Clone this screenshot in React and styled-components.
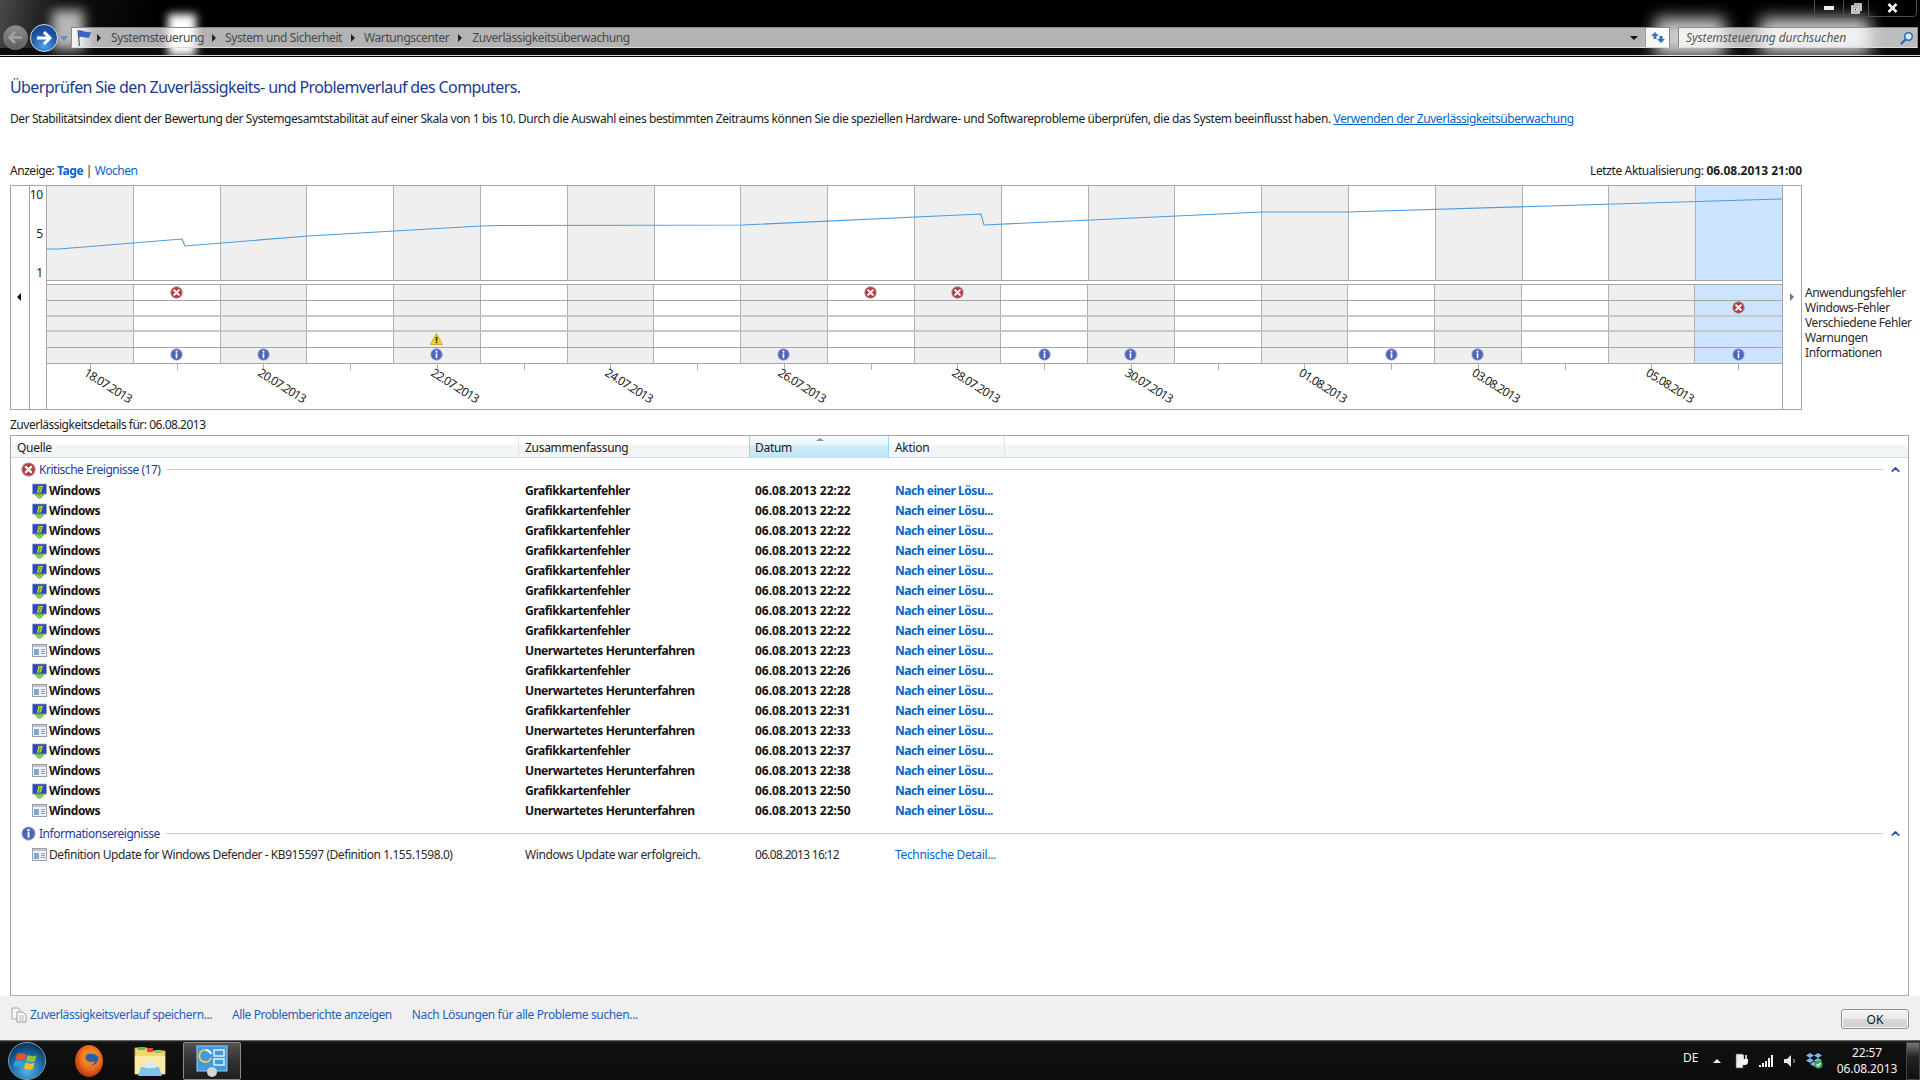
import styled, { createGlobalStyle } from "styled-components";
import { ChevronUp } from "lucide-react";

const GlobalStyle = createGlobalStyle`
  html, body {
    margin: 0;
    padding: 0;
    background: #fff;
    overflow: hidden;
  }
  body {
    font-family: "Noto Sans", "Open Sans", sans-serif;
    font-size: 12px;
    letter-spacing: -0.45px;
    color: #1c1c1c;
  }
  * { box-sizing: border-box; }
`;

const COLUMNS = "508px 231px 139px 116px 1fr";

const Page = styled.div`
  width: 1920px;
  height: 1080px;
  display: flex;
  flex-direction: column;
  overflow: hidden;
`;

/* ---------- title bar ---------- */

const TitleBar = styled.div`
  position: relative;
  height: 57px;
  flex: none;
  background: linear-gradient(100deg, #4a4a4a 0, #111 60px, #000 160px);
  border-bottom: 1px solid #000;
  box-shadow: inset 0 -1px 0 #d8d8d8, inset 0 -8px 0 #0c0c0c;
  display: flex;
  align-items: flex-start;
  padding-top: 27px;
  overflow: hidden;
`;

const Glow = styled.div`
  position: absolute;
  background: #fff;
  filter: blur(${(p) => p.$blur || 5}px);
  opacity: ${(p) => p.$o || 1};
  left: ${(p) => p.$x}px;
  top: ${(p) => p.$y}px;
  width: ${(p) => p.$w}px;
  height: ${(p) => p.$h}px;
`;

const NavGroup = styled.div`
  position: relative;
  width: 71px;
  height: 21px;
  flex: none;
`;

const NavButton = styled.div`
  position: absolute;
  top: ${(p) => (p.$active ? -3 : -2)}px;
  left: ${(p) => (p.$active ? 30 : 3)}px;
  width: ${(p) => (p.$active ? 28 : 25)}px;
  height: ${(p) => (p.$active ? 28 : 25)}px;
  border-radius: 50%;
  border: 1px solid ${(p) => (p.$active ? "#c8dcf4" : "#777")};
  background: ${(p) =>
    p.$active
      ? "radial-gradient(circle at 50% 80%, #4aa2ea, #1a4f9e 60%, #173d80)"
      : "linear-gradient(#8e8e8e, #5e5e5e)"};
  display: flex;
  align-items: center;
  justify-content: center;
`;

const NavDrop = styled.div`
  position: absolute;
  left: 60px;
  top: 9px;
  width: 0;
  height: 0;
  border-left: 4px solid transparent;
  border-right: 4px solid transparent;
  border-top: 5px solid #5d8fc4;
`;

const AddressBar = styled.div`
  position: relative;
  width: 1599px;
  height: 21px;
  flex: none;
  background: linear-gradient(90deg, #f4f4f4 0, rgba(255, 255, 255, 0.7) 22px);
  border: 1px solid #8a8a8a;
  border-bottom-color: #dcdcdc;
  display: flex;
  align-items: center;
  color: #4a4a4a;
  letter-spacing: -0.4px;
`;

const Crumbs = styled.div`
  display: flex;
  align-items: center;
  flex: 1;
  padding-left: 3px;
`;

const Crumb = styled.span`
  margin-left: ${(p) => p.$gap}px;
`;

const CrumbArrow = styled.span`
  width: 0;
  height: 0;
  margin-left: ${(p) => p.$gap}px;
  border-top: 4px solid transparent;
  border-bottom: 4px solid transparent;
  border-left: 4px solid #222;
`;

const HistoryDrop = styled.div`
  width: 0;
  height: 0;
  margin-right: 7px;
  border-left: 4px solid transparent;
  border-right: 4px solid transparent;
  border-top: 4px solid #111;
`;

const RefreshBox = styled.div`
  width: 24px;
  height: 19px;
  background: rgba(255, 255, 255, 0.85);
  border-left: 1px solid #999;
  display: flex;
  align-items: center;
  justify-content: center;
`;

const SearchBox = styled.div`
  position: relative;
  width: 240px;
  height: 21px;
  margin-left: 8px;
  flex: none;
  background: rgba(255, 255, 255, 0.74);
  border: 1px solid #8a8a8a;
  border-bottom-color: #dcdcdc;
  display: flex;
  align-items: center;
  justify-content: space-between;
  padding: 0 3px 0 7px;
  color: #555;
  font-style: italic;
  letter-spacing: -0.09px;
`;

const WindowButtons = styled.div`
  position: absolute;
  right: 3px;
  top: -1px;
  width: 103px;
  height: 18px;
  display: flex;
  border: 1px solid #4d4d4d;
  border-radius: 0 0 4px 4px;
`;

const WindowButton = styled.div`
  width: ${(p) => p.$w}px;
  display: flex;
  align-items: center;
  justify-content: center;
  border-right: ${(p) => (p.$last ? "none" : "1px solid #4d4d4d")};
`;

/* ---------- main ---------- */

const Main = styled.main`
  flex: 1;
  min-height: 0;
  display: flex;
  flex-direction: column;
  padding: 19px 11px 0 10px;
`;

const Heading = styled.h1`
  margin: 0;
  font-size: 16px;
  line-height: 22px;
  font-weight: 400;
  letter-spacing: -0.61px;
  color: #1a3a94;
`;

const Intro = styled.p`
  margin: 13px 0 0;
  line-height: 16px;
  white-space: nowrap;
  letter-spacing: -0.42px;
`;

const TextLink = styled.a`
  color: #0066cc;
  text-decoration: ${(p) => (p.$underline ? "underline" : "none")};
  font-weight: ${(p) => (p.$bold ? 700 : 400)};
  cursor: pointer;
`;

const ViewRow = styled.div`
  margin-top: 36px;
  width: 1792px;
  line-height: 16px;
  display: flex;
  justify-content: space-between;
`;

const UpdatedAt = styled.span`
  letter-spacing: -0.38px;
  strong { letter-spacing: 0; }
`;

const ChartRow = styled.div`
  margin-top: 6px;
  display: flex;
  align-items: flex-start;
`;

const ChartFrame = styled.div`
  width: 1792px;
  height: 225px;
  flex: none;
  display: flex;
  border: 1px solid #a6a6a6;
`;

const ScrollPane = styled.div`
  width: ${(p) => p.$w}px;
  flex: none;
  padding-top: ${(p) => p.$top}px;
  padding-right: ${(p) => (p.$side === "right" ? 2 : 0)}px;
  display: flex;
  justify-content: center;
  align-items: flex-start;
  border-${(p) => p.$side}: 1px solid #a6a6a6;
`;

const ScrollArrow = styled.span`
  width: 0;
  height: 0;
  border-top: 4px solid transparent;
  border-bottom: 4px solid transparent;
  ${(p) =>
    p.$right
      ? "border-left: 4px solid #777;"
      : "border-right: 4px solid #111;"}
`;

const AxisPane = styled.div`
  width: 17px;
  flex: none;
  border-right: 1px solid #a6a6a6;
  display: flex;
  flex-direction: column;
  align-items: flex-end;
  padding: 1px 3px 0 0;
  line-height: 16px;
  gap: 23px;
  letter-spacing: -0.2px;
`;

const Plot = styled.div`
  flex: 1;
  min-width: 0;
  display: flex;
  flex-direction: column;
`;

const Trend = styled.div`
  position: relative;
  height: 95px;
  flex: none;
  display: flex;
  border-bottom: 1px solid #a6a6a6;
`;

const DayColumn = styled.div`
  flex: 1;
  border-right: 1px solid #b0b0b0;
  background: ${(p) => (p.$selected ? "#cce4ff" : p.$alt ? "#efefef" : "#fff")};
  &:last-of-type { border-right: none; }
`;

const TrendLine = styled.svg`
  position: absolute;
  left: 0;
  top: 0;
`;

const Events = styled.div`
  margin-top: 3px;
  flex: none;
  height: 80px;
  border-top: 1px solid #a6a6a6;
  display: grid;
  grid-template-columns: repeat(20, 1fr);
  grid-template-rows: repeat(5, 1fr);
`;

const EventCell = styled.div`
  border-right: 1px solid #b0b0b0;
  border-bottom: ${(p) => (p.$soft ? "2px solid #c8c8c8" : "1px solid #a6a6a6")};
  background: ${(p) => (p.$selected ? "#cce4ff" : p.$alt ? "#efefef" : "#fff")};
  padding-bottom: ${(p) => p.$raise || 0}px;
  display: flex;
  align-items: center;
  justify-content: center;
  &:nth-child(20n) { border-right: none; }
`;

const DatesRow = styled.div`
  flex: 1;
  display: flex;
`;

const DateSlot = styled.div`
  position: relative;
  flex: 1;
  display: flex;
  justify-content: center;
  &::before {
    content: "";
    width: 1px;
    height: 6px;
    background: #b0b0b0;
  }
`;

const DateLabel = styled.span`
  position: absolute;
  left: 50%;
  top: 0;
  transform: rotate(32deg);
  transform-origin: left top;
  white-space: nowrap;
  letter-spacing: -0.8px;
`;

const Legend = styled.ul`
  list-style: none;
  margin: 0 0 0 3px;
  padding: 100px 0 0;
  line-height: 15px;
  letter-spacing: -0.4px;
  white-space: nowrap;
  color: #2a2a2a;
`;

const DetailsLabel = styled.div`
  margin-top: 7px;
  line-height: 16px;
  letter-spacing: -0.49px;
`;

const TablePanel = styled.section`
  margin-top: 2px;
  flex: 1;
  min-height: 0;
  border: 1px solid #a6a6a6;
  border-bottom-color: #b0b0b0;
`;

const TableHead = styled.div`
  height: 22px;
  display: grid;
  grid-template-columns: ${COLUMNS};
  background: linear-gradient(#fff 0, #fff 40%, #f2f3f5 42%, #f4f5f6 100%);
  border-bottom: 1px solid #d6dbe0;
`;

const HeadCell = styled.div`
  position: relative;
  display: flex;
  align-items: center;
  padding-left: ${(p) => p.$pad || 6}px;
  padding-top: 1px;
  border-right: 1px solid #e2e4e7;
  letter-spacing: -0.3px;
  ${(p) =>
    p.$sorted &&
    `background: linear-gradient(#f4fafd 0, #eaf6fc 40%, #cfecf9 42%, #bfe6f7 100%);
     border-left: 1px solid #96d9f9;
     border-right: 1px solid #96d9f9;
     margin-left: -1px;
     margin-bottom: -1px;
     padding-top: 0;`}
  &:last-child { border-right: none; }
`;

const SortMark = styled.span`
  position: absolute;
  top: 2px;
  left: 66px;
  width: 0;
  height: 0;
  border-left: 4px solid transparent;
  border-right: 4px solid transparent;
  border-bottom: 3px solid #8a949c;
`;

const GroupHead = styled.div`
  height: 23px;
  margin-top: ${(p) => (p.$spaced ? 1 : 0)}px;
  padding: 0 6px 0 10px;
  display: flex;
  align-items: center;
  color: #1e3a9e;
  letter-spacing: -0.47px;
  &::after {
    content: "";
    flex: 1;
    height: 1px;
    margin: 0 6px;
    background: #c3cbdc;
  }
`;

const GroupIcon = styled.span`
  display: flex;
  width: 15px;
  margin-left: 0;
  margin-right: 3px;
`;

const Collapse = styled(ChevronUp)`
  order: 1;
  width: 13px;
  height: 13px;
  color: #2b4ea5;
  stroke-width: 3;
`;

const Row = styled.div`
  height: 20px;
  margin-top: ${(p) => (p.$first ? -0.5 : 0)}px;
  display: grid;
  grid-template-columns: ${COLUMNS};
  align-items: center;
  font-weight: ${(p) => (p.$strong ? 700 : 400)};
  color: ${(p) => (p.$strong ? "#111" : "#2a2a2a")};
  letter-spacing: ${(p) => (p.$strong ? "-0.42px" : "-0.4px")};
`;

const SourceCell = styled.div`
  display: flex;
  align-items: center;
  gap: 2px;
  padding-left: 21px;
`;

const DefinitionName = styled.span`
  letter-spacing: -0.44px;
`;

const Cell = styled.div`
  padding-left: ${(p) => p.$pad || 6}px;
  white-space: nowrap;
`;

const DateCell = styled(Cell)`
  padding-left: 5px;
  letter-spacing: ${(p) => (p.$strong ? "0" : "-0.7px")};
`;

const ActionLink = styled(TextLink)`
  letter-spacing: ${(p) => (p.$bold ? "-0.47px" : "-0.33px")};
`;

/* ---------- footer + taskbar ---------- */

const Footer = styled.footer`
  height: 44px;
  flex: none;
  padding: 0 11px 0 11px;
  background: #f0f0f0;
  display: flex;
  align-items: center;
  position: relative;
`;

const FooterLinks = styled.nav`
  display: flex;
  align-items: center;
  margin-top: -7px;
`;

const FooterLink = styled(TextLink)`
  margin-left: ${(p) => p.$gap}px;
  letter-spacing: ${(p) => p.$spacing || -0.43}px;
  color: #1f62b8;
`;

const OkButton = styled.button`
  margin-left: auto;
  margin-top: 2px;
  width: 68px;
  height: 20px;
  border: 1px solid #8e8f8f;
  border-radius: 3px;
  background: linear-gradient(#f4f4f4 0, #ebebeb 48%, #d8d8d8 52%, #cfcfcf 100%);
  box-shadow: inset 0 0 0 1px #fbfbfb;
  font: inherit;
  letter-spacing: 0;
  color: #111;
  padding: 0;
`;

const Taskbar = styled.div`
  height: 40px;
  flex: none;
  background: linear-gradient(#2a2a2a 0, #111 2px, #0c0c0c 100%);
  border-top: 1px solid #666;
  display: flex;
  align-items: center;
  color: #f2f2f2;
`;

const StartSlot = styled.div`
  width: 58px;
  display: flex;
  justify-content: center;
  padding-right: 4px;
`;

const TaskSlot = styled.div`
  width: ${(p) => p.$w || 61}px;
  height: 38px;
  margin-left: ${(p) => p.$gap || 0}px;
  display: flex;
  align-items: center;
  justify-content: center;
  ${(p) =>
    p.$active &&
    `border: 1px solid #8a8a8a;
     border-radius: 2px;
     background: linear-gradient(#555 0, #333 45%, #1e1e1e 100%);`}
`;

const Tray = styled.div`
  margin-left: auto;
  display: flex;
  align-items: center;
  height: 100%;
`;

const TrayLang = styled.span`
  width: 24px;
  margin-top: -6px;
  letter-spacing: 0;
`;

const TrayIcon = styled.span`
  width: ${(p) => p.$w}px;
  display: flex;
  justify-content: center;
`;

const TrayUp = styled.span`
  width: 0;
  height: 0;
  margin-left: 6px;
  margin-right: 9px;
  border-left: 4px solid transparent;
  border-right: 4px solid transparent;
  border-bottom: 4px solid #eee;
`;

const Clock = styled.div`
  width: 78px;
  margin-left: 2px;
  text-align: center;
  line-height: 16px;
  letter-spacing: -0.1px;
`;

const ShowDesktop = styled.div`
  width: 14px;
  height: 38px;
  border: 1px solid #444;
  background: linear-gradient(#777, #222 40%, #111);
`;

/* ---------- icons ---------- */

const ErrorIcon = ({ size = 13 }) => (
  <svg width={size} height={size} viewBox="0 0 16 16">
    <circle cx="8" cy="8" r="7.6" fill="#9b8a8b" />
    <circle cx="8" cy="8" r="6.4" fill="#bd3743" />
    <path d="M5.2 5.2l5.6 5.6M10.800 5.200l-5.600 5.600" stroke="#fff" strokeWidth="2.4" strokeLinecap="round" />
  </svg>
);

const InfoIcon = ({ size = 13 }) => (
  <svg width={size} height={size} viewBox="0 0 16 16">
    <circle cx="8" cy="8" r="7.6" fill="#98a6d0" />
    <circle cx="8" cy="8" r="6.4" fill="#4a66b8" />
    <circle cx="8" cy="4.500" r="1.300" fill="#fff" />
    <rect x="7" y="6.500" width="2" height="6" fill="#fff" />
  </svg>
);

const WarnIcon = () => (
  <svg width="13" height="12" viewBox="0 0 13 12">
    <path d="M6.500.5L12.600 11.500H.4z" fill="#f2d21c" stroke="#b89a12" strokeWidth=".7" />
    <rect x="5.800" y="3.800" width="1.500" height="4" fill="#222" />
    <rect x="5.800" y="8.600" width="1.500" height="1.500" fill="#222" />
  </svg>
);

const ShieldIcon = () => (
  <svg width="15" height="16" viewBox="0 0 15 16">
    <rect x=".5" y="1" width="14" height="10" fill="#2f46bc" stroke="#98a6d4" strokeWidth=".7" />
    <path d="M6.500 3h4.500L9 9.500H4.800z" fill="#c9dc33" />
    <path d="M7 4.800h2.400M6.500 6.500h2.200M6.100 8.200h2" stroke="#3b6a24" strokeWidth=".9" />
    <path d="M2 11h11l-4.500 4.500h-2z" fill="#59bb3f" />
    <path d="M5 11.500l2.500 2.500 2.500-2.500" fill="none" stroke="#cdeec1" strokeWidth=".8" />
  </svg>
);

const DocIcon = () => (
  <svg width="15" height="13" viewBox="0 0 15 13">
    <rect x=".5" y=".5" width="14" height="12" fill="#f1f3f5" stroke="#9aa0a8" />
    <rect x="1" y="1" width="13" height="2" fill="#bcc4ce" />
    <rect x="2" y="5" width="5" height="6" fill="#7ea7dd" />
    <path d="M9 5.500h4M9 7.500h4M9 9.500h4" stroke="#8f98a4" />
  </svg>
);

const SaveDocIcon = () => (
  <svg width="16" height="16" viewBox="0 0 16 16">
    <path d="M1 1h6l2 2v9H1z" fill="#f6f6f6" stroke="#a9a9a9" />
    <path d="M6 5h6l3 3v7H6z" fill="#fbfbfb" stroke="#9c9c9c" />
    <path d="M8 9h5M8 11h5M8 13h5" stroke="#b4bcc8" />
  </svg>
);

const BackArrow = () => (
  <svg width="15" height="13" viewBox="0 0 15 13">
    <path d="M7 1L1.500 6.500 7 12M2 6.500h12" fill="none" stroke="#a4a4a4" strokeWidth="2.600" />
  </svg>
);

const ForwardArrow = () => (
  <svg width="16" height="14" viewBox="0 0 16 14">
    <path d="M8 1l6 6-6 6M13 7H1" fill="none" stroke="#fff" strokeWidth="3" />
  </svg>
);

const FlagIcon = () => (
  <svg width="18" height="18" viewBox="0 0 18 18">
    <path d="M3 1l1.400 16" stroke="#5a5a5a" strokeWidth="1.200" />
    <path d="M3.400 1.500C7 .5 9 4 17 3c-1.500 2-2.500 3-2.500 5.500-4.500 1-7.500-2-10.500 0z" fill="#3a62c6" />
  </svg>
);

const RefreshIcon = () => (
  <svg width="16" height="13" viewBox="0 0 16 13">
    <path d="M5 1L1 5h2.500v3h3V5H9z" fill="#3f78bd" />
    <path d="M11 12l4-4h-2.500V5h-3v3H7z" fill="#2f6fb5" />
  </svg>
);

const SearchIcon = () => (
  <svg width="14" height="14" viewBox="0 0 14 14">
    <circle cx="8.500" cy="5.500" r="3.800" fill="#dbeafb" stroke="#2c6db5" strokeWidth="1.600" />
    <path d="M5.500 8.500L1.500 12.500" stroke="#2c6db5" strokeWidth="2.400" strokeLinecap="round" />
  </svg>
);

const MinimizeGlyph = () => (
  <svg width="12" height="5" viewBox="0 0 12 5">
    <rect x="1" y="0" width="10" height="4" fill="#eee" />
  </svg>
);

const RestoreGlyph = () => (
  <svg width="11" height="11" viewBox="0 0 11 11">
    <path d="M3 1h7v7M1 3h7v7H1zM3 5h3v3H3z" fill="none" stroke="#eee" strokeWidth="1.600" />
  </svg>
);

const CloseGlyph = () => (
  <svg width="11" height="10" viewBox="0 0 11 10">
    <path d="M1.500 1l8 8M9.500 1l-8 8" stroke="#f2f2f2" strokeWidth="2.600" />
  </svg>
);

const StartOrb = () => (
  <svg width="38" height="38" viewBox="0 0 38 38">
    <defs>
      <radialGradient id="orb" cx="50%" cy="75%" r="70%">
        <stop offset="0" stopColor="#58b6e4" />
        <stop offset=".6" stopColor="#1d6aa5" />
        <stop offset="1" stopColor="#10345c" />
      </radialGradient>
    </defs>
    <circle cx="19" cy="19" r="18.500" fill="url(#orb)" stroke="#7f9db8" />
    <path d="M9 12c3-1.500 6-1 9 .5l-1.500 6c-3-1.400-6-1.800-9-.5z" fill="#e8522a" />
    <path d="M19.500 13c3 1.400 6 1.600 9 .2l-1.500 6c-3 1.400-6 1-9-.3z" fill="#8fc13e" />
    <path d="M7 19c3-1.200 6-.9 9 .5l-1.500 6c-3-1.400-6-1.800-9-.4z" fill="#3aa0dc" />
    <path d="M17.500 20.500c3 1.400 6 1.600 9 .2l-1.500 6c-3 1.400-6 1-9-.3z" fill="#f5c02c" />
  </svg>
);

const FirefoxIcon = () => (
  <svg width="32" height="34" viewBox="0 0 32 34">
    <defs>
      <radialGradient id="fox" cx="55%" cy="40%" r="65%">
        <stop offset="0" stopColor="#f6b73a" />
        <stop offset=".6" stopColor="#e8651e" />
        <stop offset="1" stopColor="#a62a0e" />
      </radialGradient>
    </defs>
    <ellipse cx="16" cy="17" rx="14" ry="16" fill="url(#fox)" />
    <circle cx="18" cy="14" r="7.500" fill="#2b5fa8" />
    <path d="M12 6c6-3 13 0 14 7-3-3-7-4-11-3-2 1-3 3-2 5 1 3 6 4 9 2-1 4-6 6-10 4C7 18 7 10 12 6z" fill="#ef8422" />
  </svg>
);

const FolderIcon = () => (
  <svg width="34" height="32" viewBox="0 0 34 32">
    <path d="M2 3h12l2 3h16v23H2z" fill="#f5d66e" stroke="#c9a94a" />
    <rect x="5" y="2" width="7" height="3" fill="#5dbb4a" />
    <rect x="14" y="3" width="6" height="4" fill="#d9483a" />
    <rect x="22" y="5" width="7" height="3" fill="#8fc66a" />
    <path d="M2 11h30v18H2z" fill="#fbe9a8" />
    <path d="M8 22h18l3 9H5z" fill="#7fc3ea" />
    <rect x="12" y="17" width="10" height="6" fill="#d8ecf7" />
  </svg>
);

const PanelIcon = () => (
  <svg width="32" height="32" viewBox="0 0 32 32">
    <rect x="1" y="1" width="30" height="25" fill="#3f9ae0" stroke="#9ad0f3" />
    <path d="M10 5a6 6 0 1 0 5 8" fill="none" stroke="#f6c44a" strokeWidth="2" />
    <path d="M10 5a6 6 0 0 1 5 4" fill="none" stroke="#fff" strokeWidth="2" />
    <rect x="18" y="5" width="10" height="6" fill="none" stroke="#dff1fc" strokeWidth="1.500" />
    <rect x="18" y="14" width="10" height="6" fill="none" stroke="#dff1fc" strokeWidth="1.500" />
    <circle cx="16" cy="27" r="5" fill="#d6d6d6" />
  </svg>
);

const PowerIcon = () => (
  <svg width="14" height="16" viewBox="0 0 14 16">
    <rect x="1" y="1" width="7" height="14" fill="#eee" stroke="#555" strokeWidth=".6" />
    <path d="M6 6h7v4l-2 2H8L6 10z" fill="#f4f4f4" />
    <path d="M8 2v4M11 2v4" stroke="#f4f4f4" strokeWidth="1.600" />
  </svg>
);

const SignalIcon = () => (
  <svg width="15" height="12" viewBox="0 0 15 12">
    <rect x="0" y="10" width="2" height="2" fill="#f2f2f2" />
    <rect x="3" y="8" width="2" height="4" fill="#f2f2f2" />
    <rect x="6" y="6" width="2" height="6" fill="#f2f2f2" />
    <rect x="9" y="3" width="2" height="9" fill="#f2f2f2" />
    <rect x="12" y="0" width="2" height="12" fill="#f2f2f2" />
  </svg>
);

const SpeakerIcon = () => (
  <svg width="13" height="14" viewBox="0 0 13 14">
    <path d="M0 5h3l4-4v12l-4-4H0z" fill="#e8e8e8" />
    <path d="M9.500 5c1 1.300 1 2.700 0 4" fill="none" stroke="#bbb" />
  </svg>
);

const DropboxIcon = () => (
  <svg width="17" height="17" viewBox="0 0 17 17">
    <path d="M4 1l4 2.500L4 6 0 3.500zM12 1l4 2.500L12 6 8 3.500zM4 6l4 2.500L4 11 0 8.500zM12 6l4 2.500L12 11 8 8.500zM4 12l4-2.500 4 2.500-4 2.500z" fill="#7cb5ea" />
    <circle cx="12.500" cy="12.500" r="4" fill="#2fa84f" />
    <path d="M10.500 12.500l1.500 1.500 2.500-3" fill="none" stroke="#fff" strokeWidth="1.200" />
  </svg>
);

/* ---------- data ---------- */

const DAYS = Array.from({ length: 20 }, (_, i) => i);
const SELECTED = 19;

const DATE_LABELS = {
  0: "18.07.2013",
  2: "20.07.2013",
  4: "22.07.2013",
  6: "24.07.2013",
  8: "26.07.2013",
  10: "28.07.2013",
  12: "30.07.2013",
  14: "01.08.2013",
  16: "03.08.2013",
  18: "05.08.2013",
};

const EVENTS = {
  "0-1": "error",
  "0-9": "error",
  "0-10": "error",
  "1-19": "error",
  "3-4": "warn",
  "4-1": "info",
  "4-2": "info",
  "4-4": "info",
  "4-8": "info",
  "4-11": "info",
  "4-12": "info",
  "4-15": "info",
  "4-16": "info",
  "4-19": "info",
};

const TREND =
  "0,63 12,63 135,53 138,60 261,50 434,40 454,39.5 695,39 934,28 937,39 1215,26 1301,26 1735,13";

const LEGEND = ["Anwendungsfehler", "Windows-Fehler", "Verschiedene Fehler", "Warnungen", "Informationen"];

const GPU = "Grafikkartenfehler";
const SHUTDOWN = "Unerwartetes Herunterfahren";

const CRITICAL = [
  [GPU, "22:22"], [GPU, "22:22"], [GPU, "22:22"], [GPU, "22:22"],
  [GPU, "22:22"], [GPU, "22:22"], [GPU, "22:22"], [GPU, "22:22"],
  [SHUTDOWN, "22:23"], [GPU, "22:26"], [SHUTDOWN, "22:28"], [GPU, "22:31"],
  [SHUTDOWN, "22:33"], [GPU, "22:37"], [SHUTDOWN, "22:38"], [GPU, "22:50"],
  [SHUTDOWN, "22:50"],
];

const renderEvent = (type) => {
  if (type === "error") return <ErrorIcon />;
  if (type === "warn") return <WarnIcon />;
  if (type === "info") return <InfoIcon />;
  return null;
};

const App = () => {
  return (
    <Page>
      <GlobalStyle />
      <TitleBar>
        <Glow $x={52} $y={10} $w={32} $h={40} $blur={6} $o={0.7} />
        <Glow $x={168} $y={14} $w={28} $h={42} $blur={4} />
        <Glow $x={1655} $y={18} $w={70} $h={38} $blur={8} $o={0.8} />
        <Glow $x={1760} $y={18} $w={110} $h={36} $blur={8} $o={0.8} />
        <NavGroup>
          <NavButton>
            <BackArrow />
          </NavButton>
          <NavButton $active>
            <ForwardArrow />
          </NavButton>
          <NavDrop />
        </NavGroup>
        <AddressBar>
          <Crumbs>
            <FlagIcon />
            <CrumbArrow $gap={4} />
            <Crumb $gap={10}>Systemsteuerung</Crumb>
            <CrumbArrow $gap={8} />
            <Crumb $gap={9}>System und Sicherheit</Crumb>
            <CrumbArrow $gap={9} />
            <Crumb $gap={9}>Wartungscenter</Crumb>
            <CrumbArrow $gap={9} />
            <Crumb $gap={10}>Zuverlässigkeitsüberwachung</Crumb>
          </Crumbs>
          <HistoryDrop />
          <RefreshBox>
            <RefreshIcon />
          </RefreshBox>
        </AddressBar>
        <SearchBox>
          <span>Systemsteuerung durchsuchen</span>
          <SearchIcon />
        </SearchBox>
        <WindowButtons>
          <WindowButton $w={29}>
            <MinimizeGlyph />
          </WindowButton>
          <WindowButton $w={25}>
            <RestoreGlyph />
          </WindowButton>
          <WindowButton $w={47} $last>
            <CloseGlyph />
          </WindowButton>
        </WindowButtons>
      </TitleBar>

      <Main>
        <Heading>Überprüfen Sie den Zuverlässigkeits- und Problemverlauf des Computers.</Heading>
        <Intro>
          Der Stabilitätsindex dient der Bewertung der Systemgesamtstabilität auf einer Skala von 1 bis 10. Durch die
          Auswahl eines bestimmten Zeitraums können Sie die speziellen Hardware- und Softwareprobleme überprüfen, die
          das System beeinflusst haben. <TextLink $underline>Verwenden der Zuverlässigkeitsüberwachung</TextLink>
        </Intro>
        <ViewRow>
          <span>
            Anzeige: <TextLink $bold>Tage</TextLink> | <TextLink>Wochen</TextLink>
          </span>
          <UpdatedAt>
            Letzte Aktualisierung: <strong>06.08.2013 21:00</strong>
          </UpdatedAt>
        </ViewRow>

        <ChartRow>
          <ChartFrame>
            <ScrollPane $w={19} $top={107} $side="right">
              <ScrollArrow />
            </ScrollPane>
            <AxisPane>
              <span>10</span>
              <span>5</span>
              <span>1</span>
            </AxisPane>
            <Plot>
              <Trend>
                {DAYS.map((d) => (
                  <DayColumn key={d} $alt={d % 2 === 0} $selected={d === SELECTED} />
                ))}
                <TrendLine width="1735" height="94" viewBox="0 0 1735 94">
                  <polyline points={TREND} fill="none" stroke="#4a9be0" strokeWidth="1.1" />
                </TrendLine>
              </Trend>
              <Events>
                {[0, 1, 2, 3, 4].map((row) =>
                  DAYS.map((d) => (
                    <EventCell
                      key={`${row}-${d}`}
                      $alt={d % 2 === 0}
                      $selected={d === SELECTED}
                      $soft={row === 1 || row === 2}
                      $raise={row >= 3 ? 2 : 0}
                    >
                      {renderEvent(EVENTS[`${row}-${d}`])}
                    </EventCell>
                  ))
                )}
              </Events>
              <DatesRow>
                {DAYS.map((d) => (
                  <DateSlot key={d}>{DATE_LABELS[d] && <DateLabel>{DATE_LABELS[d]}</DateLabel>}</DateSlot>
                ))}
              </DatesRow>
            </Plot>
            <ScrollPane $w={19} $top={107} $side="left">
              <ScrollArrow $right />
            </ScrollPane>
          </ChartFrame>
          <Legend>
            {LEGEND.map((name) => (
              <li key={name}>{name}</li>
            ))}
          </Legend>
        </ChartRow>

        <DetailsLabel>Zuverlässigkeitsdetails für: 06.08.2013</DetailsLabel>

        <TablePanel>
          <TableHead>
            <HeadCell>Quelle</HeadCell>
            <HeadCell>Zusammenfassung</HeadCell>
            <HeadCell $sorted $pad={5}>
              <SortMark />
              Datum
            </HeadCell>
            <HeadCell>Aktion</HeadCell>
            <HeadCell />
          </TableHead>

          <GroupHead>
            <GroupIcon>
              <ErrorIcon size={15} />
            </GroupIcon>
            Kritische Ereignisse (17)
            <Collapse />
          </GroupHead>
          {CRITICAL.map(([summary, time], i) => (
            <Row key={i} $strong $first={i === 0}>
              <SourceCell>
                {summary === GPU ? <ShieldIcon /> : <DocIcon />}
                Windows
              </SourceCell>
              <Cell>{summary}</Cell>
              <DateCell $strong>06.08.2013 {time}</DateCell>
              <Cell>
                <ActionLink $bold>Nach einer Lösu...</ActionLink>
              </Cell>
            </Row>
          ))}

          <GroupHead $spaced>
            <GroupIcon>
              <InfoIcon size={15} />
            </GroupIcon>
            Informationsereignisse
            <Collapse />
          </GroupHead>
          <Row>
            <SourceCell>
              <DocIcon />
              <DefinitionName>
                Definition Update for Windows Defender - KB915597 (Definition 1.155.1598.0)
              </DefinitionName>
            </SourceCell>
            <Cell>Windows Update war erfolgreich.</Cell>
            <DateCell>06.08.2013 16:12</DateCell>
            <Cell>
              <ActionLink>Technische Detail...</ActionLink>
            </Cell>
          </Row>
        </TablePanel>
      </Main>

      <Footer>
        <FooterLinks>
          <SaveDocIcon />
          <FooterLink $gap={3}>Zuverlässigkeitsverlauf speichern...</FooterLink>
          <FooterLink $gap={20}>Alle Problemberichte anzeigen</FooterLink>
          <FooterLink $gap={20} $spacing={-0.37}>
            Nach Lösungen für alle Probleme suchen...
          </FooterLink>
        </FooterLinks>
        <OkButton>OK</OkButton>
      </Footer>

      <Taskbar>
        <StartSlot>
          <StartOrb />
        </StartSlot>
        <TaskSlot>
          <FirefoxIcon />
        </TaskSlot>
        <TaskSlot>
          <FolderIcon />
        </TaskSlot>
        <TaskSlot $active $w={58} $gap={3}>
          <PanelIcon />
        </TaskSlot>
        <Tray>
          <TrayLang>DE</TrayLang>
          <TrayUp />
          <TrayIcon $w={24}>
            <PowerIcon />
          </TrayIcon>
          <TrayIcon $w={24}>
            <SignalIcon />
          </TrayIcon>
          <TrayIcon $w={24}>
            <SpeakerIcon />
          </TrayIcon>
          <TrayIcon $w={24}>
            <DropboxIcon />
          </TrayIcon>
          <Clock>
            <div>22:57</div>
            <div>06.08.2013</div>
          </Clock>
          <ShowDesktop />
        </Tray>
      </Taskbar>
    </Page>
  );
};

export default App;
